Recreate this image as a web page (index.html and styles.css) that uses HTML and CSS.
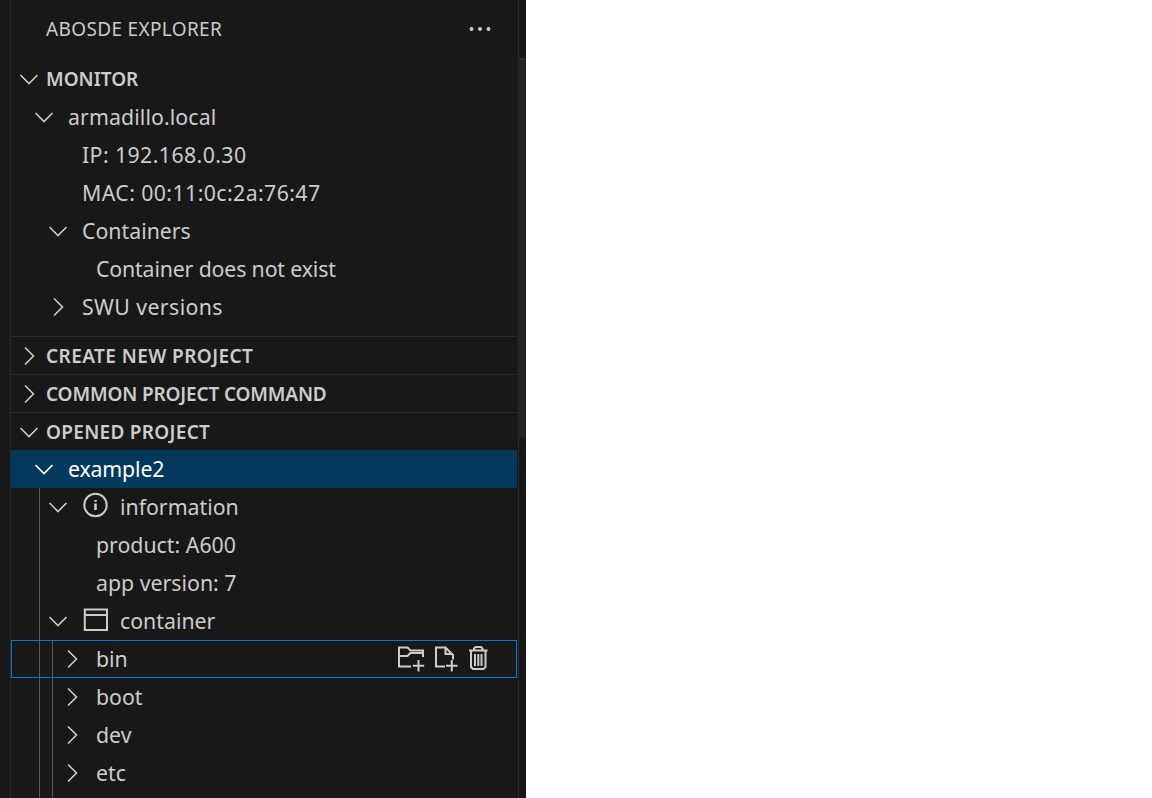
FILE: index.html
```html
<!DOCTYPE html>
<html lang="en">
<head>
  <meta charset="UTF-8">
  <title>ABOSDE Explorer</title>
  <link rel="stylesheet" href="styles.css">
</head>
<body>
  <div class="window">
    <div class="activity"></div>
    <div class="sidebar">
      <div class="title">
        <span>ABOSDE EXPLORER</span>
        <svg class="more" width="24" height="24" viewBox="0 0 24 24"><circle cx="3.5" cy="12" r="2"/><circle cx="12" cy="12" r="2"/><circle cx="20.5" cy="12" r="2"/></svg>
      </div>

      <div class="pane">
        <div class="section">
          <svg class="arrow" viewBox="0 0 20 20"><path d="M1.500 6l8.500 8.500L18.500 6"/></svg>
          <span>MONITOR</span>
        </div>
        <div class="row l1">
          <svg class="arrow" viewBox="0 0 20 20"><path d="M1.500 6l8.500 8.500L18.500 6"/></svg>
          <span class="slight">armadillo.local</span>
        </div>
        <div class="row l2 leaf"><span class="wide">IP: 192.168.0.30</span></div>
        <div class="row l2 leaf"><span class="wide">MAC: 00:11:0c:2a:76:47</span></div>
        <div class="row l2">
          <svg class="arrow" viewBox="0 0 20 20"><path d="M1.500 6l8.500 8.500L18.500 6"/></svg>
          <span>Containers</span>
        </div>
        <div class="row l3 leaf"><span class="narrow">Container does not exist</span></div>
        <div class="row l2">
          <svg class="arrow" viewBox="0 0 20 20"><path d="M6 1.500l8.500 8.500L6 18.500"/></svg>
          <span class="wide">SWU versions</span>
        </div>
      </div>

      <div class="section bordered">
        <svg class="arrow" viewBox="0 0 20 20"><path d="M6 1.500l8.500 8.500L6 18.500"/></svg>
        <span class="looser">CREATE NEW PROJECT</span>
      </div>
      <div class="section bordered">
        <svg class="arrow" viewBox="0 0 20 20"><path d="M6 1.500l8.500 8.500L6 18.500"/></svg>
        <span class="narrow">COMMON PROJECT COMMAND</span>
      </div>
      <div class="section bordered">
        <svg class="arrow" viewBox="0 0 20 20"><path d="M1.500 6l8.500 8.500L18.500 6"/></svg>
        <span class="loose">OPENED PROJECT</span>
      </div>

      <div class="row l1 selected">
        <svg class="arrow" viewBox="0 0 20 20"><path d="M1.500 6l8.500 8.500L18.500 6"/></svg>
        <span class="narrow">example2</span>
      </div>
      <div class="tree">
        <div class="row l2">
          <svg class="arrow" viewBox="0 0 20 20"><path d="M1.500 6l8.500 8.500L18.500 6"/></svg>
          <svg class="icon" width="26" height="26" viewBox="0 0 26 26"><circle cx="13.500" cy="13" r="11.200"/><path class="thick" d="M13.500 11.500v6.500M13.500 8v1.800"/></svg>
          <span>information</span>
        </div>
        <div class="row l3 leaf"><span>product: A600</span></div>
        <div class="row l3 leaf"><span>app version: 7</span></div>
        <div class="row l2">
          <svg class="arrow" viewBox="0 0 20 20"><path d="M1.500 6l8.500 8.500L18.500 6"/></svg>
          <svg class="icon" width="26" height="26" viewBox="0 0 26 26"><path d="M2.800 3.500H25v20.500H2.800zM2.800 9H25"/></svg>
          <span>container</span>
        </div>
        <div class="subtree">
          <div class="row l3 focused">
            <svg class="arrow" viewBox="0 0 20 20"><path d="M6 1.500l8.500 8.500L6 18.500"/></svg>
            <span>bin</span>
            <div class="actions">
              <svg class="action" width="28" height="26" viewBox="0 0 28 26"><path d="M13 20.500H1V1.500h8.500l3 3H25V11M1 10h8.500l3-3H25M20.500 14v11.500M14.800 19.700h11.400"/></svg>
              <svg class="action" width="26" height="26" viewBox="0 0 26 26"><path d="M11 20.500H2v-19h9.500L19 9v4.500M11.500 1.500V8H19M17.800 14v11.500M12 19.700h11.500"/></svg>
              <svg class="action" width="22" height="26" viewBox="0 0 22 26"><path d="M1 4.500h18.500M6 4.500V2.500l1.500-1.500h5.500l1.500 1.500v2M3 4.500v16.500l2 2h10.500l2-2V4.500M7 8v12M10.300 8v12M13.500 8v12"/></svg>
            </div>
          </div>
          <div class="row l3">
            <svg class="arrow" viewBox="0 0 20 20"><path d="M6 1.500l8.500 8.500L6 18.500"/></svg>
            <span>boot</span>
          </div>
          <div class="row l3">
            <svg class="arrow" viewBox="0 0 20 20"><path d="M6 1.500l8.500 8.500L6 18.500"/></svg>
            <span>dev</span>
          </div>
          <div class="row l3">
            <svg class="arrow" viewBox="0 0 20 20"><path d="M6 1.500l8.500 8.500L6 18.500"/></svg>
            <span>etc</span>
          </div>
          <div class="row"></div>
        </div>
      </div>
    </div>
    <div class="scroll">
      <div class="scroll-top"></div>
      <div class="scroll-thumb"></div>
    </div>
  </div>
</body>
</html>
```

FILE: styles.css
```css
html, body {
  margin: 0;
  padding: 0;
  height: 100%;
  background: white;
  overflow: hidden;
}
.window {
  display: flex;
  width: 526px;
  height: 798px;
  background: #181818;
  color: #cccccc;
  font-family: 'Noto Sans', sans-serif;
  font-size: 21.3px;
  overflow: hidden;
}
.activity {
  width: 10px;
  border-right: 1px solid #2b2b2b;
}
.sidebar {
  width: 506px;
  overflow: hidden;
}
.scroll {
  width: 7px;
  margin-left: 1px;
  border-left: 1px solid #2b2b2b;
  display: flex;
  flex-direction: column;
}
.scroll-top {
  height: 58px;
}
.scroll-thumb {
  height: 378px;
  background: #222222;
  border-top: 2px solid #2b2b2b;
}
.title {
  height: 60px;
  display: flex;
  align-items: center;
  justify-content: space-between;
  padding: 0 25px 2px 35px;
  box-sizing: border-box;
  font-size: 19px;
  letter-spacing: 0.35px;
}
.more {
  fill: #cccccc;
}
.pane {
  padding-bottom: 10px;
}
.section {
  height: 38px;
  display: flex;
  align-items: center;
  font-size: 19px;
  font-weight: 600;
  box-sizing: border-box;
  padding-left: 8px;
}
.bordered {
  border-top: 1px solid #2b2b2b;
}
.loose {
  letter-spacing: 0.3px;
}
.looser {
  letter-spacing: 0.42px;
}
.wide {
  letter-spacing: 0.4px;
}
.slight {
  letter-spacing: 0.1px;
}
.narrow {
  letter-spacing: -0.15px;
}
.arrow {
  width: 20px;
  height: 20px;
  fill: none;
  stroke: #cccccc;
  stroke-width: 1.6;
  flex: none;
}
.section .arrow {
  margin-right: 7px;
}
.row {
  height: 38px;
  display: flex;
  align-items: center;
  box-sizing: border-box;
  padding-bottom: 2px;
  position: relative;
}
.row .arrow {
  margin: 2px 14px 0 0;
}
.l1 { padding-left: 23px; }
.l2 { padding-left: 37px; }
.l3 { padding-left: 51px; }
.leaf.l2 { padding-left: 71px; }
.leaf.l3 { padding-left: 85px; }
.selected {
  background: #04395e;
  color: #ffffff;
}
.selected .arrow {
  stroke: #ffffff;
}
.tree {
  border-left: 1px solid #585858;
  margin-left: 28px;
}
.tree .row {
  margin-left: -29px;
}
.subtree {
  border-left: 1px solid #585858;
  margin-left: 12px;
}
.subtree .row {
  margin-left: -42px;
}
.icon {
  fill: none;
  stroke: #cccccc;
  stroke-width: 2;
  flex: none;
  margin: -2px 12px 0 0;
}
.thick {
  stroke-width: 2.6;
}
.focused {
  outline: 1px solid #0078d4;
  outline-offset: -1px;
}
.actions {
  margin: 2px 27px 0 auto;
  display: flex;
  gap: 8px;
}
.action {
  fill: none;
  stroke: #cccccc;
  stroke-width: 2;
  flex: none;
}
```
